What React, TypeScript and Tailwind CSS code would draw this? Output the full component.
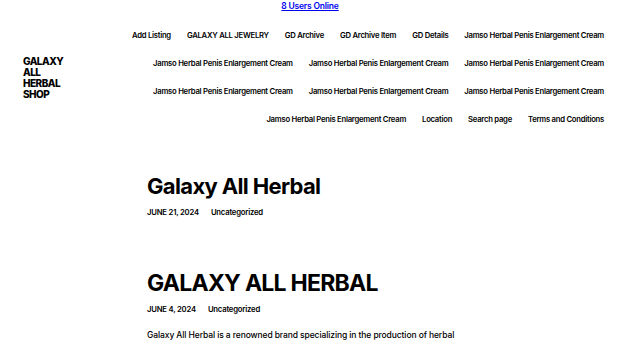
const navItems = [
  "Add Listing",
  "GALAXY ALL JEWELRY",
  "GD Archive",
  "GD Archive Item",
  "GD Details",
  "Jamso Herbal Penis Enlargement Cream",
  "Jamso Herbal Penis Enlargement Cream",
  "Jamso Herbal Penis Enlargement Cream",
  "Jamso Herbal Penis Enlargement Cream",
  "Jamso Herbal Penis Enlargement Cream",
  "Jamso Herbal Penis Enlargement Cream",
  "Jamso Herbal Penis Enlargement Cream",
  "Jamso Herbal Penis Enlargement Cream",
  "Location",
  "Search page",
  "Terms and Conditions",
];

export default function App() {
  return (
    <div className="min-h-screen bg-white text-[#000] font-['Inter',sans-serif]">
      {/* online counter */}
      <div className="flex justify-center">
        <a href="#" className="text-[8.5px] leading-[12px] font-semibold text-[#0000ee] underline tracking-[-0.2px]">
          8 Users Online
        </a>
      </div>

      {/* header */}
      <header className="flex items-center pl-[23px] pr-[16px] mt-[10px]">
        <div className="w-[80px] shrink-0 text-[10px] leading-[11px] font-extrabold tracking-[-0.5px]">
          GALAXY
          <br />
          ALL
          <br />
          HERBAL
          <br />
          SHOP
        </div>
        <nav className="flex-1 flex flex-wrap justify-end gap-x-[16px]">
          {navItems.map((item, i) => (
            <a key={i} href="#" className="h-[28px] flex items-center text-[7.7px] font-semibold tracking-[-0.26px] whitespace-nowrap">
              {item}
            </a>
          ))}
        </nav>
      </header>

      {/* posts */}
      <main className="w-[326px] mx-auto mt-[39px]">
        <article>
          <h2 className="text-[22px] leading-[26px] font-bold tracking-[-0.65px]">Galaxy All Herbal</h2>
          <div className="flex gap-[12px] mt-[9px] text-[7.7px] leading-[10px] font-semibold tracking-[-0.2px]">
            <span>JUNE 21, 2024</span>
            <span>Uncategorized</span>
          </div>
        </article>
        <article className="mt-[51px]">
          <h2 className="text-[23px] leading-[28px] font-bold tracking-[-0.75px]">GALAXY ALL HERBAL</h2>
          <div className="flex gap-[12px] mt-[8px] text-[7.7px] leading-[10px] font-semibold tracking-[-0.2px]">
            <span>JUNE 4, 2024</span>
            <span>Uncategorized</span>
          </div>
          <p className="mt-[13px] text-[8.5px] leading-[14px] font-medium tracking-[-0.1px]">
            Galaxy All Herbal is a renowned brand specializing in the production of herbal products, blending
            traditional remedies with modern wellness.
          </p>
        </article>
      </main>
    </div>
  );
}
